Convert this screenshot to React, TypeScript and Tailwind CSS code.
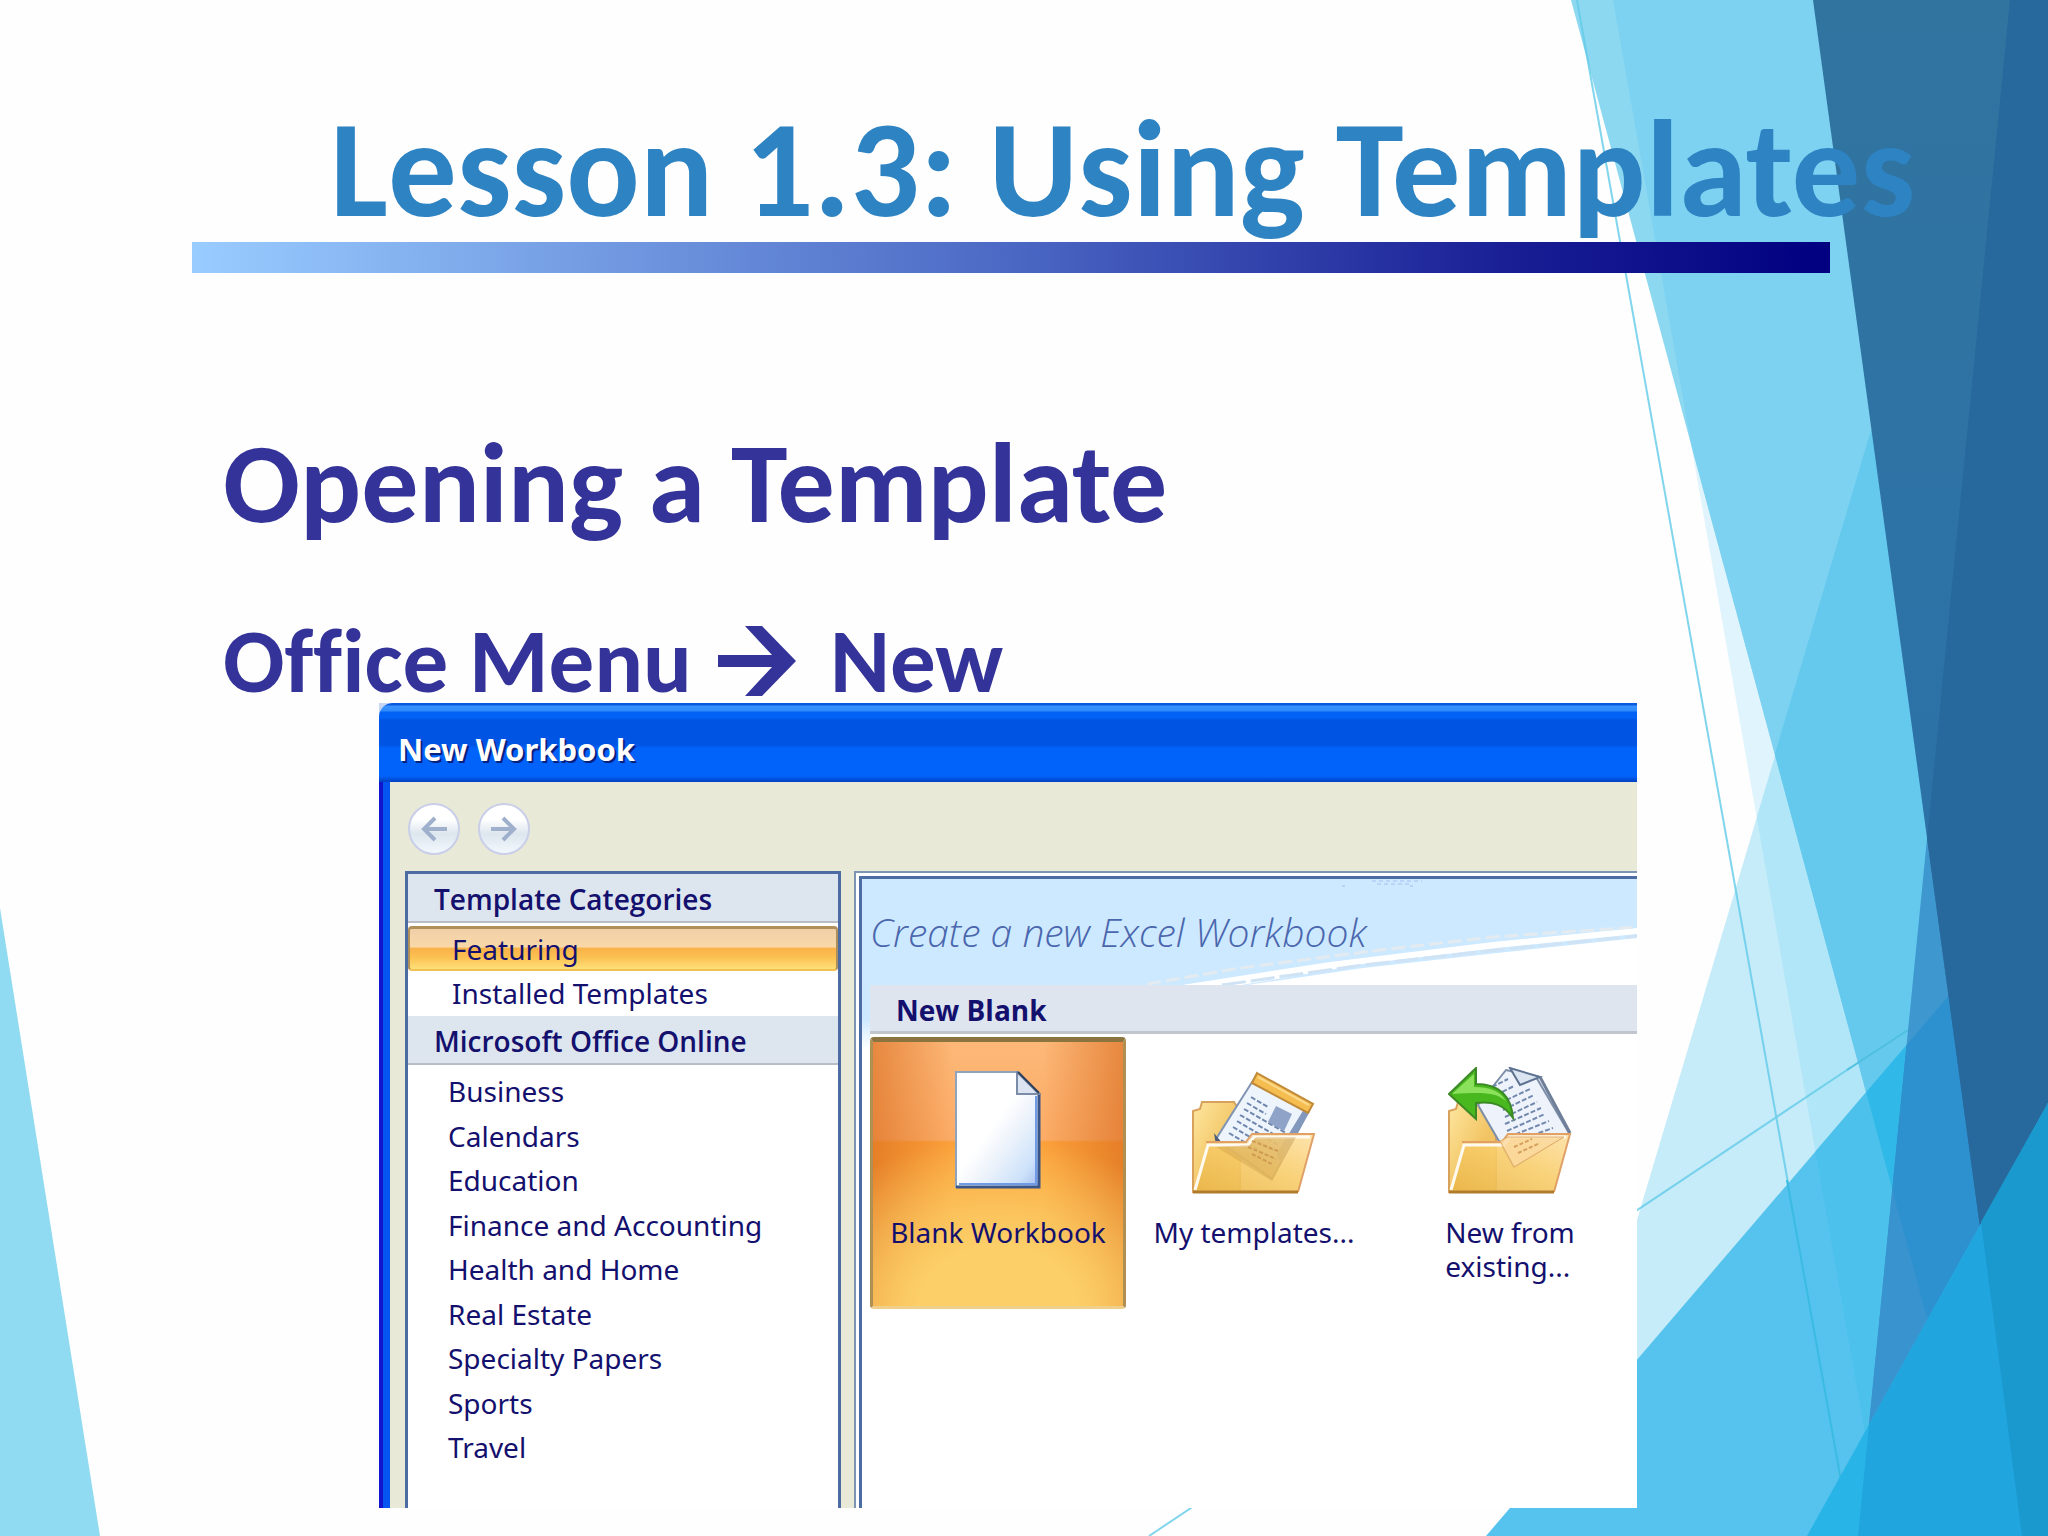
import React from "react";

const EDGE_A = "1571,0 2048,0 2048,1536 1986,1536";
const EDGE_B = "1613,0 2048,0 2048,1536 1883,1536";
const EDGE_D = "2010,0 2048,0 2048,1536 1858,1536";
const EDGE_E = "2000,0 2048,0 2048,1536 1543,1536";
const EDGE_F = "1486,1536 2048,880 2048,1536";
const EDGE_C = "1813,0 2048,0 2048,1536 2022,1536";
const EDGE_G = "1807,1536 2048,1103 2048,1536";

function Backdrop() {
  return (
    <svg
      className="absolute inset-0 h-full w-full"
      viewBox="0 0 2048 1536"
      preserveAspectRatio="none"
      aria-hidden="true"
    >
      <defs>
        <clipPath id="clipA"><polygon points={EDGE_A} /></clipPath>
        <clipPath id="clipB"><polygon points={EDGE_B} /></clipPath>
        <clipPath id="clipC"><polygon points={EDGE_C} /></clipPath>
        <clipPath id="clipD"><polygon points={EDGE_D} /></clipPath>
        <clipPath id="clipF"><polygon points={EDGE_F} /></clipPath>
        <linearGradient id="deep" x1="0" y1="0" x2="0" y2="1">
          <stop offset="0" stopColor="#3174a0" />
          <stop offset="0.5" stopColor="#2c72a7" />
        </linearGradient>
      </defs>
      <polygon points="0,908 100,1536 0,1536" fill="#90dbf2" />
      <polygon points={EDGE_B} fill="#dff4fc" />
      <polygon points={EDGE_E} fill="#c6ebf9" />
      <polygon points={EDGE_E} fill="#b0e6f7" clipPath="url(#clipB)" />
      <polygon points={EDGE_A} fill="#8dd8f1" />
      <polygon points={EDGE_B} fill="#7dd2f1" clipPath="url(#clipA)" />
      <polygon points="1871,430 2048,430 2048,1536 1543,1536" fill="#65c9ee" clipPath="url(#clipA)" />
      <g stroke="#62cbe9" strokeWidth="2" opacity="0.8">
        <line x1="1577" y1="0" x2="1851" y2="1536" />
        <line x1="1149" y1="1536" x2="1850" y2="1068" />
      </g>
      <line x1="1847" y1="1070" x2="1908" y2="1030" stroke="#4fbfe0" strokeWidth="2" />
      <polygon points={EDGE_F} fill="#55c3ee" />
      <polygon points={EDGE_B} fill="#4cc1eb" clipPath="url(#clipF)" />
      <polygon points={EDGE_A} fill="#30b9e8" clipPath="url(#clipF)" />
      <line x1="1787" y1="1180" x2="1851" y2="1536" stroke="#3bbbe2" strokeWidth="2" />
      <polygon points={EDGE_D} fill="#3f97cf" />
      <g clipPath="url(#clipD)">
        <polygon points={EDGE_F} fill="#3893cf" />
        <polygon points={EDGE_A} fill="#2d91cf" clipPath="url(#clipF)" />
      </g>
      <polygon points={EDGE_C} fill="url(#deep)" />
      <polygon points={EDGE_D} fill="#27699c" clipPath="url(#clipC)" />
      <polygon points={EDGE_G} fill="#29b4e7" />
      <polygon points="1869,1425 2048,1103 2048,1536 1858,1536" fill="#21a5de" />
      <polygon points="1981,1222 2048,1103 2048,1536 2022,1536" fill="#1a99cf" />
    </svg>
  );
}

function NavButton({ dir }: { dir: "back" | "forward" }) {
  return (
    <button
      type="button"
      aria-label={dir === "back" ? "Back" : "Forward"}
      className="flex size-[52px] items-center justify-center rounded-full border-2 border-[#c9cfe8] bg-linear-to-b from-white from-30% via-[#dde6ee] via-60% to-[#f2f8fd]"
    >
      <svg viewBox="0 0 28 26" className="h-[26px] w-[28px]" fill="none" stroke="#9fb0cc" strokeWidth="4">
        {dir === "back" ? <path d="M27 13H4M15 2L4 13L15 24" /> : <path d="M1 13H24M13 2L24 13L13 24" />}
      </svg>
    </button>
  );
}

function BlankPageIcon() {
  return (
    <svg viewBox="0 0 86 118" className="h-[118px] w-[86px]">
      <defs>
        <linearGradient id="sheet" x1="0" y1="0" x2="1" y2="1">
          <stop offset="0.45" stopColor="#ffffff" />
          <stop offset="0.62" stopColor="#edf3fb" />
          <stop offset="0.85" stopColor="#cde2fa" />
          <stop offset="1" stopColor="#a5bdf0" />
        </linearGradient>
      </defs>
      <path d="M1 1H63L84 23V116H1Z" fill="url(#sheet)" stroke="#8fa3bd" strokeWidth="2" />
      <path d="M84 22V116H1" fill="none" stroke="#3a5688" strokeWidth="3" />
      <path d="M81 25V113H4" fill="none" stroke="#6f9ae6" strokeWidth="2" />
      <path d="M62 1V23H84Z" fill="#dbe4f0" stroke="#7b8ca8" strokeWidth="2" />
      <path d="M63 1L84 22" stroke="#2e3f5c" strokeWidth="2" />
    </svg>
  );
}

function FolderDefs() {
  return (
    <defs>
      <linearGradient id="folderBack" x1="0" y1="0" x2="1" y2="1">
        <stop offset="0" stopColor="#fde7a0" />
        <stop offset="0.6" stopColor="#f2c362" />
      </linearGradient>
      <linearGradient id="folderFront" x1="0" y1="1" x2="1" y2="0">
        <stop offset="0" stopColor="#e9b548" />
        <stop offset="0.55" stopColor="#f8cd6b" />
        <stop offset="1" stopColor="#fde0a4" />
      </linearGradient>
    </defs>
  );
}

function FolderFront() {
  return (
    <>
      <path d="M15 72H55L61 64H121L106 121H2Z" fill="url(#folderFront)" fillOpacity="0.9" />
      <path d="M3 119L16 74H56L62 66H118" fill="none" stroke="#fffaf0" strokeWidth="3" />
      <path d="M14 71H54L60 63H122L106 121" fill="none" stroke="#e0a066" strokeWidth="2" />
      <path d="M1 121H106" stroke="#b07c2c" strokeWidth="3" />
    </>
  );
}

function TemplatesIcon() {
  return (
    <svg viewBox="0 0 124 124" className="h-[124px] w-[124px]">
      <FolderDefs />
      <path d="M1 121V40L8 38L10 31H42L48 40V121Z" fill="url(#folderBack)" stroke="#d9a25c" strokeWidth="2" />
      <path d="M62 8L118 38L80 108L24 68Z" fill="#eef4fc" stroke="#7f93b3" strokeWidth="2" />
      <path d="M112 38L118 40L88 90L84 84Z" fill="#8299bd" />
      <g stroke="#6f86ad" strokeWidth="2" strokeDasharray="5 2">
        <path d="M59 26L76 36M55 32L74 43M52 38L94 62M48 44L90 68M45 50L86 74M41 56L82 80M37 62L78 86" />
      </g>
      <path d="M84 35L100 43L92 60L76 51Z" fill="#8fa3c8" />
      <path d="M65 2L121 33L116 42L60 12Z" fill="#f5bd4f" stroke="#c08a38" strokeWidth="2" />
      <path d="M66 6L117 34" stroke="#fbd98b" strokeWidth="2" />
      <path d="M22 62L30 72L24 74Z" fill="#4c5c78" />
      <FolderFront />
      <path d="M24 76L80 110L104 66H64L58 74Z" fill="#b98a35" fillOpacity="0.28" />
      <path d="M56 76L84 88M60 70L86 80M60 83L80 93" stroke="#cf9b52" strokeWidth="2" strokeDasharray="4 2" />
    </svg>
  );
}

function ExistingIcon() {
  return (
    <svg viewBox="0 0 124 128" className="h-[128px] w-[124px]">
      <g transform="translate(0 4)">
        <path d="M1 121V40L8 38L10 31H42L48 40V121Z" fill="url(#folderBack)" stroke="#d9a25c" strokeWidth="2" />
        <path d="M58 -1L88 6L121 62L66 96L30 34Z" fill="#eef3fb" stroke="#7d8ea9" strokeWidth="2" />
        <path d="M62 -3L72 14L92 6Z" fill="#dbe4f1" stroke="#5d7191" strokeWidth="2" />
        <path d="M92 6L122 62" stroke="#6f7f99" strokeWidth="3" />
        <g stroke="#7389ae" strokeWidth="2" strokeDasharray="5 2">
          <path d="M44 16L60 8M48 24L66 15M52 32L82 18M55 39L86 24M57 46L89 31M57 53L93 37M59 60L97 43M61 66L101 50M64 71L105 57" />
        </g>
        <FolderFront />
        <path d="M52 70L66 96L116 66H60Z" fill="#fbd9a0" fillOpacity="0.8" stroke="#e0aa68" strokeWidth="1" />
        <path d="M66 76L84 68M70 82L92 72" stroke="#d59f5c" strokeWidth="2" strokeDasharray="4 2" />
      </g>
      <path d="M1 27L28 1V17C50 17 63 28 65 51C56 38 46 34 28 36V52Z" fill="#48b81e" stroke="#3c8a26" strokeWidth="2" />
      <path d="M5 26L26 7V20C42 20 52 24 58 34C48 26 38 25 5 27Z" fill="#8be05c" />
    </svg>
  );
}

function Swoosh() {
  return (
    <svg viewBox="0 0 775 106" preserveAspectRatio="xMaxYMid slice" className="absolute inset-0 h-full w-full" aria-hidden="true">
      <path d="M320 106L468 83L631 63L775 49V55L635 69L501 85L380 106Z" fill="#ffffff" />
      <path d="M285 105L378 89L518 71L631 58L775 48" fill="none" stroke="#e3ebf0" strokeWidth="3" strokeDasharray="14 5" />
      <path d="M385 106L501 89L635 74L775 59V106Z" fill="#ffffff" />
      <path d="M360 106L501 86L635 71L775 57" fill="none" stroke="#cfe3f4" strokeWidth="3" strokeDasharray="24 5" />
      <path d="M510 2H560M515 5H550M480 7H483M548 7H551" stroke="#b9d4f7" strokeWidth="2" strokeDasharray="4 3" />
    </svg>
  );
}

const online = [
  "Business",
  "Calendars",
  "Education",
  "Finance and Accounting",
  "Health and Home",
  "Real Estate",
  "Specialty Papers",
  "Sports",
  "Travel",
];

function CategoryHeading({ children }: { children: React.ReactNode }) {
  return (
    <h3 className="h-[49px] border-b-2 border-[#b9bec6] bg-[#dde6ee] pl-[26px] font-['Open_Sans',sans-serif] text-[28px] leading-[50px] font-semibold">
      {children}
    </h3>
  );
}

function Workbook() {
  return (
    <section
      aria-label="New Workbook"
      className="mr-[411px] ml-[379px] flex flex-1 flex-col overflow-hidden bg-white font-['Noto_Sans','Open_Sans',sans-serif] text-[#14106e]"
    >
      <div className="bg-[#c5d5f2]">
        <div className="flex h-[79px] items-center rounded-tl-[14px] bg-[linear-gradient(to_bottom,#0a5ae0_0,#0a5ae0_2px,#3a94ff_3px,#2f8bfd_8px,#0162f5_9px,#0162f5_15px,#0054e3_17px,#0054e3_42px,#0163fa_45px,#0163fa_73px,#0040c0_79px)] pt-3 pl-[19px]">
          <h2 className="text-[31px] leading-9 font-bold whitespace-nowrap text-white [text-shadow:2px_2px_0_#06217e]">
            New Workbook
          </h2>
        </div>
      </div>
      <div className="flex flex-1 flex-col border-l-4 border-l-[#1414cc] bg-[#e9e9d8] pl-[7px] shadow-[inset_7px_0_0_#0556f0]">
        <div className="flex h-[89px] items-center gap-[18px] pt-1 pl-[18px]">
          <NavButton dir="back" />
          <NavButton dir="forward" />
        </div>
        <div className="flex flex-1 pl-[15px]">
          <nav className="w-[436px] shrink-0 border-x-[3px] border-t-[3px] border-[#4d6ca3] bg-white text-[28px] whitespace-nowrap">
            <CategoryHeading>Template Categories</CategoryHeading>
            <ul className="pt-[3px]">
              <li>
                <button
                  type="button"
                  className="block h-[45px] w-full rounded-sm border-2 border-t-[3px] border-[#b0905a] border-b-[#f0c050] bg-[linear-gradient(to_bottom,#f0d0a8_0,#f9d9a8_45%,#f9b24a_48%,#fcc050_70%,#fde07a_100%)] pl-[42px] text-left leading-10"
                >
                  Featuring
                </button>
              </li>
              <li>
                <button type="button" className="block h-[45px] w-full pl-[44px] text-left leading-[45px]">
                  Installed Templates
                </button>
              </li>
            </ul>
            <CategoryHeading>Microsoft Office Online</CategoryHeading>
            <ul className="grid h-[405px] auto-rows-fr pt-[4px]">
              {online.map((name) => (
                <li key={name}>
                  <button type="button" className="block w-full pl-[40px] text-left leading-[45px]">
                    {name}
                  </button>
                </li>
              ))}
            </ul>
          </nav>
          <div className="ml-[13px] flex min-w-0 flex-1 border-t-2 border-l-2 border-[#7c95b4] bg-white pt-[3px] pl-[3px]">
            <div className="min-w-0 flex-1 border-t-[3px] border-l-[3px] border-[#4d6ca3] bg-linear-to-b from-[#cde9ff] from-[140px] to-white to-[170px]">
              <div className="relative h-[106px] bg-[#cde9ff] pt-[21px] pl-[8px]">
                <Swoosh />
                <h2 className="relative font-['Open_Sans',sans-serif] text-[39px] leading-[64px] font-light whitespace-nowrap text-[#4a66ad] italic">
                  Create a new Excel Workbook
                </h2>
              </div>
              <div className="ml-2 bg-white">
                <h3 className="h-[49px] border-b-[3px] border-[#c1c5cc] bg-[#dee5ef] pl-[26px] font-['Open_Sans',sans-serif] text-[28px] leading-[50px] font-bold">
                  New Blank
                </h3>
                <div className="flex pt-[3px] text-[28px] leading-[34px] whitespace-nowrap">
                  <button
                    type="button"
                    className="flex h-[272px] w-[256px] shrink-0 flex-col items-center gap-[26px] rounded-sm border-[3px] border-t-[5px] border-[#b08f52] border-t-[#8a7440] border-b-[#f0cf8a] bg-[radial-gradient(ellipse_90%_64%_at_50%_100%,#fccf68_35%,transparent_100%),linear-gradient(to_right,#d8681a99_0,transparent_32%,transparent_68%,#d8681a99_100%),linear-gradient(to_bottom,#fdb878_0,#fbac66_37%,#fba03a_38%,#fbb54a_100%)] pt-[29px]"
                  >
                    <BlankPageIcon />
                    <span>Blank Workbook</span>
                  </button>
                  <button type="button" className="flex h-[272px] w-[256px] shrink-0 flex-col items-center gap-[20px] pt-[34px]">
                    <TemplatesIcon />
                    <span>My templates...</span>
                  </button>
                  <button type="button" className="flex h-[272px] w-[256px] shrink-0 flex-col items-center gap-[20px] pt-[30px]">
                    <ExistingIcon />
                    <span className="text-left">
                      New from
                      <br />
                      existing...
                    </span>
                  </button>
                </div>
              </div>
            </div>
          </div>
        </div>
      </div>
    </section>
  );
}

export default function App() {
  return (
    <main className="relative flex min-h-screen flex-col overflow-hidden bg-[#fefefe] pb-[28px] font-[Carlito,Lato,sans-serif]">
      <Backdrop />
      <div className="relative flex flex-1 flex-col">
        <header className="pt-[98px]">
          <h1 className="pl-[330px] text-[137px] leading-[144px] font-bold whitespace-nowrap text-[#2e83c3]">
            Lesson 1.3: Using Templates
          </h1>
          <div className="mr-[218px] ml-[192px] h-[31px] bg-[linear-gradient(to_right,#99ccff,#4b68c4_50%,#1a1f95_80%,#000080)]" />
        </header>
        <div className="h-[430px] pt-[150px] pl-[223px] font-bold whitespace-nowrap text-[#333399] [font-variant-ligatures:none]">
          <h2 className="text-[114px] leading-[120px]">Opening a Template</h2>
          <p className="mt-[70px] flex items-center text-[91px] leading-[96px]">
            Office Menu
            <svg viewBox="0 0 78 70" className="mr-[34px] ml-[26px] h-[70px] w-[78px]" role="img" aria-label="then">
              <path d="M0 29H54L27 0H44L78 35L44 70H27L54 41H0Z" fill="#333399" />
            </svg>
            New
          </p>
        </div>
        <Workbook />
      </div>
    </main>
  );
}
